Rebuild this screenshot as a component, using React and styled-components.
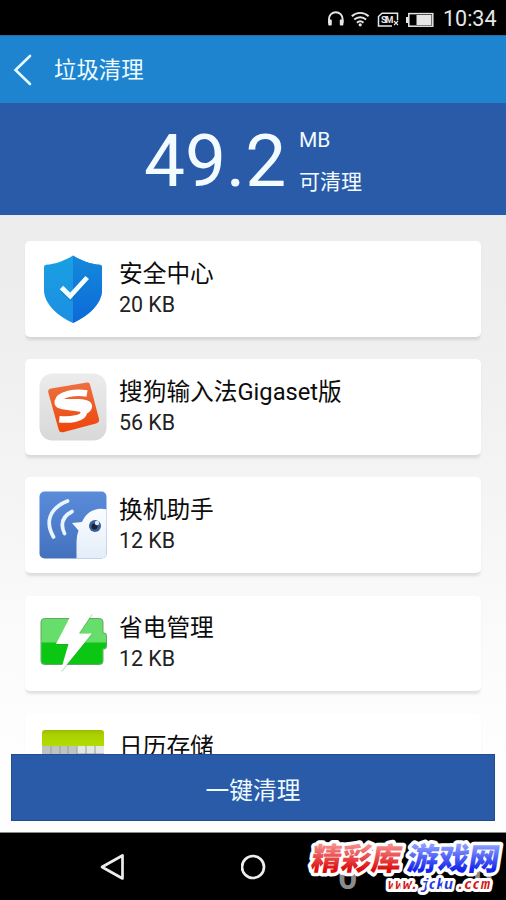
import styled, { createGlobalStyle } from 'styled-components';

const GlobalStyle = createGlobalStyle`
	* {
		box-sizing: border-box;
	}
	body {
		margin: 0;
		background-color: #000;
		font-family: Roboto, 'Noto Sans CJK SC', sans-serif;
	}
`;

const Screen = styled.div`
	width: 506px;
	height: 900px;
	display: flex;
	flex-direction: column;
	overflow: hidden;
	background-color: #000;
`;

const StatusBar = styled.div`
	flex: none;
	height: 35px;
	display: flex;
	align-items: center;
	justify-content: flex-end;
	padding: 2px 8px 0 0;
	color: #e6e6e6;
`;

const Clock = styled.span`
	margin-left: 9px;
	width: 55px;
	font-size: 21.5px;
	line-height: 32px;
	white-space: nowrap;
`;

const Header = styled.header`
	flex: none;
	height: 68px;
	display: flex;
	align-items: center;
	padding-left: 13px;
	background-color: #1e84d0;
	border-top: 1px solid #2b6c9f;
`;

const Title = styled.h1`
	margin: 0 0 0 21px;
	font-size: 22.4px;
	font-weight: 400;
	line-height: 32px;
	color: #eefcff;
`;

const Summary = styled.section`
	flex: none;
	height: 112px;
	display: flex;
	padding: 18px 0 0 144px;
	background-color: #2a5ba9;
	color: #f2fbff;
`;

const Amount = styled.div`
	width: 155px;
	font-size: 73px;
	line-height: 80px;
`;

const Units = styled.div`
	display: flex;
	flex-direction: column;
	font-size: 21px;
	line-height: 42px;
	margin-top: -2px;
`;

const List = styled.ul`
	flex: none;
	height: 539px;
	margin: 0;
	padding: 25px 25px 0;
	list-style: none;
	overflow: hidden;
	background: linear-gradient(#ececec, #f1f1f1 35%, #fbfbfb 80%, #fefefe);
	border-top: 1px solid #e3edf7;
`;

const Card = styled.li`
	height: 95.5px;
	margin-bottom: 22.7px;
	display: flex;
	align-items: center;
	padding-left: 14px;
	border-radius: 5px;
	background-color: #fff;
	box-shadow: 0 4px 3px -1px rgba(0, 0, 0, 0.11);
`;

const Info = styled.div`
	margin-left: 12px;
	color: #0c0c0c;
`;

const Name = styled.div`
	font-size: 23.7px;
	line-height: 32px;
`;

const Size = styled.div`
	font-size: 21.4px;
	line-height: 30px;
	color: #222;
`;

const Footer = styled.footer`
	flex: none;
	height: 78px;
	padding: 0 11px 11px;
	background-color: #fefefe;
`;

const CleanButton = styled.button`
	display: block;
	width: 100%;
	height: 67px;
	padding: 2px 0 0;
	border: 1px solid #234c91;
	background-color: #2a5ba9;
	color: #eefaff;
	font-family: inherit;
	font-size: 23.7px;
`;

const NavBar = styled.nav`
	position: relative;
	flex: 1;
	display: flex;
	align-items: center;
	padding-left: 100px;
	gap: 115px;
	border-top: 1px solid #8b8b8b;
`;

const SiteMark = styled.svg`
	position: absolute;
	right: 0;
	top: 0;
`;

const StatusIcons = () => (
	<svg width="108" height="22" viewBox="326 7 108 22" fill="none" stroke="currentColor">
		<path d="M329 22v-4a6.7 6.7 0 0 1 13.6 0v4" strokeWidth="1.9" />
		<rect x="328.2" y="18.6" width="3.6" height="6" rx="1" fill="currentColor" stroke="none" />
		<rect x="339.8" y="18.6" width="3.6" height="6" rx="1" fill="currentColor" stroke="none" />
		<path
			d="M351.8 15.2a12.2 12.2 0 0 1 16.8 0M354.3 18.5a8.7 8.7 0 0 1 11.8 0M356.9 21.7a5 5 0 0 1 6.6 0"
			strokeWidth="1.9"
		/>
		<circle cx="360.2" cy="23.8" r="1.6" fill="currentColor" stroke="none" />
		<path d="M392 25h-13.5v-9.5l3.5-3.2h15.5v7" strokeWidth="1.5" />
		<text
			x="381"
			y="22"
			fontSize="9"
			fontWeight="700"
			fill="currentColor"
			stroke="none"
			textLength="12.5"
		>
			SIM
		</text>
		<path d="m394 20 4 4m0-4-4 4" strokeWidth="1.1" />
		<rect x="408.8" y="12.6" width="24" height="12.6" strokeWidth="1.5" />
		<path d="M416.5 14h15v10h-15zM406 16h2.5v6H406z" fill="currentColor" stroke="none" />
	</svg>
);

const ShieldIcon = () => (
	<svg width="68" height="68" viewBox="0 0 68 68">
		<defs>
			<linearGradient id="shieldLeft" x2="0" y2="1">
				<stop stopColor="#19a0e2" />
				<stop offset="1" stopColor="#1c8fe2" />
			</linearGradient>
			<linearGradient id="shieldRight" x2="0" y2="1">
				<stop stopColor="#1589db" />
				<stop offset="1" stopColor="#0b6ad9" />
			</linearGradient>
		</defs>
		<path
			d="M34 .5C27 5 16 9.500 7 9.800Q5 10 5 12v23c0 15 16 27 29 33 13-6 29-18 29-33V12q0-2-2-2.200C52 9.500 41 5 34 .5z"
			fill="url(#shieldLeft)"
		/>
		<path
			d="M34 .5C41 5 52 9.500 61 9.800q2 .2 2 2.200v23c0 15-16 27-29 33z"
			fill="url(#shieldRight)"
		/>
		<path
			d="M22.500 34 31.500 41.500 48 22.500"
			fill="none"
			stroke="#176db1"
			strokeWidth="5"
			opacity=".35"
			transform="translate(.5 1.500)"
		/>
		<path d="m22.500 32.500 8.700 8.500 17-18.500" fill="none" stroke="#f4feff" strokeWidth="4.800" />
	</svg>
);

const SogouIcon = () => (
	<svg width="68" height="68" viewBox="0 0 68 68">
		<defs>
			<linearGradient id="sogouTile" x2="0" y2="1">
				<stop stopColor="#ececec" />
				<stop offset="1" stopColor="#d8d8d8" />
			</linearGradient>
			<linearGradient id="sogouRed" x2="0" y2="1">
				<stop stopColor="#ed7042" />
				<stop offset="1" stopColor="#ee4509" />
			</linearGradient>
		</defs>
		<rect x=".5" y=".5" width="67" height="67" rx="13" fill="url(#sogouTile)" />
		<path
			d="M12 15.500 48 9.500q2.500-.5 3 2l9 34.500q.6 3.500-3 4.500L24 59.200q-3.500.8-4.300-2.400L9.300 19.500q-.8-3.200 2.700-4z"
			fill="url(#sogouRed)"
		/>
		<path
			d="M48 20.500C36 18.500 20.500 21 18.800 28.500c-1.600 8.500 25.700 3 26 10.500.3 6.500-13.800 8.300-24.500 7.300"
			fill="none"
			stroke="#fff"
			strokeWidth="6.500"
		/>
		<path
			d="M19 31c1 6.500 15 5.500 22 6 4 .4 4.500 3 1 6 7-2 12-6 11-11-1.500-6-11-6-19-6-8 .2-12 0-12-2z"
			fill="#fff"
		/>
	</svg>
);

const BirdIcon = () => (
	<svg width="68" height="68" viewBox="0 0 68 68">
		<defs>
			<linearGradient id="birdSky" x2="0" y2="1">
				<stop stopColor="#5a8cda" />
				<stop offset="1" stopColor="#4371be" />
			</linearGradient>
			<linearGradient id="birdBody" x2="0" y2="1">
				<stop stopColor="#fafdff" />
				<stop offset="1" stopColor="#e3edf8" />
			</linearGradient>
			<clipPath id="birdTile">
				<rect x=".5" y=".5" width="67" height="67" rx="5" />
			</clipPath>
		</defs>
		<g clipPath="url(#birdTile)">
			<rect width="68" height="68" fill="url(#birdSky)" />
			<path
				d="M68 18.500C57 15.500 47 21 43 31l-10 1 6.500 7.500q-2 5-2 12V68H68z"
				fill="url(#birdBody)"
			/>
		</g>
		<path
			d="M28.500 10C9 18 6.500 32 14.500 46M33 20.500C22.500 26 21.500 34 25.500 42.500"
			fill="none"
			stroke="#e8f4ff"
			strokeWidth="3.700"
			strokeLinecap="round"
		/>
		<circle cx="56" cy="35" r="6" fill="#3a5f96" />
		<circle cx="55.500" cy="35.500" r="3" fill="#16233c" />
		<circle cx="58" cy="32" r="2.200" fill="#dbeaff" />
	</svg>
);

const BatteryIcon = () => (
	<svg width="68" height="68" viewBox="0 0 68 68">
		<path
			d="M5.500 9.500h55q3.500 0 3.500 3.500v11h1q2.500 0 2.500 2.500v11q0 2.500-2.500 2.500h-1v12q0 3.500-3.500 3.500h-55Q2 55.500 2 52V13q0-3.500 3.500-3.500z"
			fill="#67dd6b"
			stroke="#63a766"
		/>
		<path
			d="M2.500 33.500h64.500V37q0 2.500-2.500 2.500H63.500V51.500q0 3.500-3.500 3.500H6q-3.500 0-3.500-3.500z"
			fill="#0bc714"
		/>
		<path d="M33 9.500 18 35.800h13L22 64l32-39.500H41L54 5 44 9.500z" fill="#278d35" opacity=".35" />
		<path d="M30.500 9 17 35h12.500L21 64l32-39.500H40L53 5 45 9z" fill="#fff" />
	</svg>
);

const CalendarIcon = () => (
	<svg width="68" height="68" viewBox="0 0 68 68">
		<defs>
			<linearGradient id="calTop" x2="0" y2="1">
				<stop stopColor="#9dbd00" />
				<stop offset=".3" stopColor="#a9d200" />
				<stop offset="1" stopColor="#b4dc00" />
			</linearGradient>
		</defs>
		<path d="M3 17h62v51H3z" fill="#bfc4c2" />
		<path d="M38 18h27v7H38z" fill="#e3e8e5" />
		<path d="M12 17v50M21 17v50M29 17v50M38 17v50M47 17v50M56 17v50M3 27h62" stroke="#969e9b" />
		<path d="M6 2h56q3 0 3 3v13H3V5q0-3 3-3z" fill="url(#calTop)" />
	</svg>
);

const apps = [
	{ name: '安全中心', size: '20 KB', Icon: ShieldIcon },
	{ name: '搜狗输入法Gigaset版', size: '56 KB', Icon: SogouIcon },
	{ name: '换机助手', size: '12 KB', Icon: BirdIcon },
	{ name: '省电管理', size: '12 KB', Icon: BatteryIcon },
	{ name: '日历存储', size: '', Icon: CalendarIcon },
];

const App = () => {
	return (
		<>
			<GlobalStyle />
			<Screen>
				<StatusBar>
					<StatusIcons />
					<Clock>10:34</Clock>
				</StatusBar>
				<Header>
					<svg width="20" height="32" viewBox="0 0 20 32" fill="none" stroke="#e4fbff">
						<path d="M17 2 2.500 16 17 30" strokeWidth="2.600" strokeLinecap="round" />
					</svg>
					<Title>垃圾清理</Title>
				</Header>
				<Summary>
					<Amount>49.2</Amount>
					<Units>
						<span>MB</span>
						<span>可清理</span>
					</Units>
				</Summary>
				<List>
					{apps.map(({ name, size, Icon }) => (
						<Card key={name}>
							<Icon />
							<Info>
								<Name>{name}</Name>
								<Size>{size || '\u00a0'}</Size>
							</Info>
						</Card>
					))}
				</List>
				<Footer>
					<CleanButton>一键清理</CleanButton>
				</Footer>
				<NavBar>
					<svg width="26" height="28" viewBox="0 0 26 28" fill="none" stroke="#ededed">
						<path d="M2 14 22.500 2.500v23z" strokeWidth="2.700" strokeLinejoin="round" />
					</svg>
					<svg width="26" height="28" viewBox="0 0 26 28" fill="none" stroke="#ededed">
						<circle cx="12" cy="14" r="11" strokeWidth="2.700" />
					</svg>
					<SiteMark width="216" height="67" viewBox="290 833 216 67">
						<defs>
							<linearGradient id="markRed" x2="0" y2="1">
								<stop offset=".25" stopColor="#f58a8a" />
								<stop offset=".8" stopColor="#db0b0b" />
							</linearGradient>
							<linearGradient id="markBlue" x2="0" y2="1">
								<stop offset=".25" stopColor="#8a9cff" />
								<stop offset=".8" stopColor="#1424ee" />
							</linearGradient>
						</defs>
						<text x="338" y="889" fontSize="34" fontWeight="700" fill="#8b8b8b" textLength="155">
							0.0
						</text>
						<g
							fontFamily="Noto Sans CJK SC"
							fontWeight="900"
							fontSize="31"
							stroke="#fff"
							strokeWidth="7"
							strokeLinejoin="round"
							paintOrder="stroke"
						>
							<text
								transform="translate(310 870) skewX(-9)"
								textLength="90"
								lengthAdjust="spacingAndGlyphs"
								fill="url(#markRed)"
							>
								精彩库
							</text>
							<text
								transform="translate(406 870) skewX(-9)"
								textLength="92"
								lengthAdjust="spacingAndGlyphs"
								fill="url(#markBlue)"
							>
								游戏网
							</text>
						</g>
						<g
							fontFamily="Liberation Mono"
							fontStyle="italic"
							fontWeight="700"
							fontSize="15"
							stroke="#fff"
							strokeWidth="6"
							strokeLinejoin="round"
							paintOrder="stroke"
						>
							<text x="388" y="889" fill="#d51616" textLength="31">
								www.
							</text>
							<text x="421" y="889" fill="#2537dd" textLength="32">
								jcku
							</text>
							<text x="456" y="889" fill="#d51616" textLength="34">
								.com
							</text>
						</g>
					</SiteMark>
				</NavBar>
			</Screen>
		</>
	);
};

export default App;
